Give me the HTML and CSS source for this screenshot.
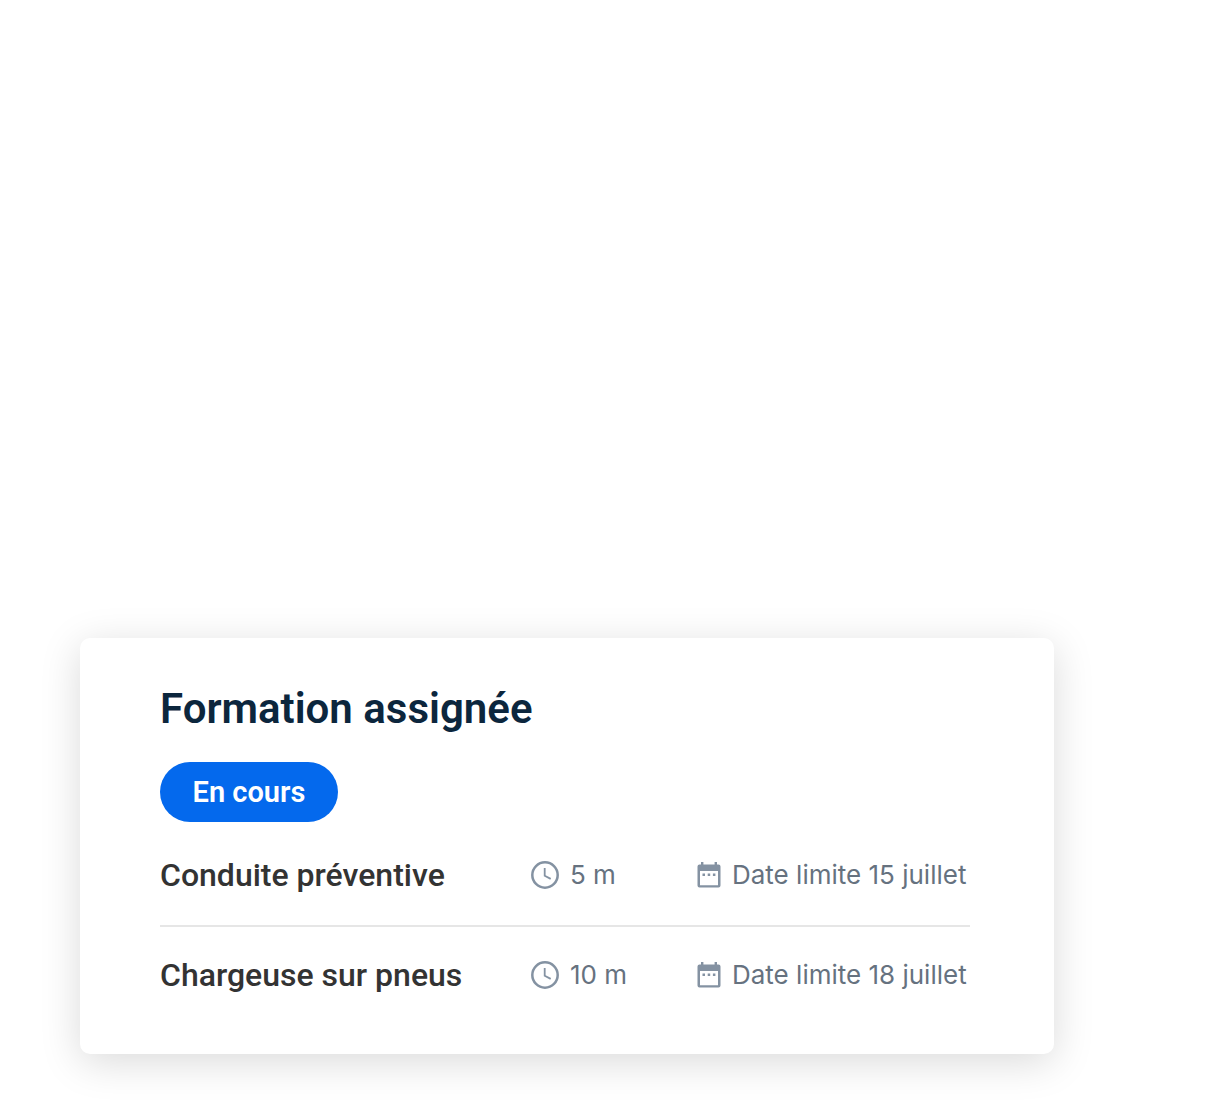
FILE: index.html
```html
<!DOCTYPE html>
<html lang="fr">
<head>
  <meta charset="UTF-8" />
  <meta name="viewport" content="width=device-width, initial-scale=1.0"/>
  <title>Formation assignée</title>
  <link rel="stylesheet" href="styles.css">
</head>
<body>
  <svg class="sprite" aria-hidden="true">
    <symbol id="horloge" viewBox="0 0 28 28">
      <circle cx="14" cy="14" r="12.7" fill="none" stroke="currentColor" stroke-width="2.5"/>
      <path d="M13.7 7v7.7l6 3.2" fill="none" stroke="currentColor" stroke-width="1.8"/>
    </symbol>
    <symbol id="calendrier" viewBox="0 0 24 26">
      <path fill="currentColor" fill-rule="evenodd" d="M4 0h2.4v2.5h11.2V0H20v2.5h1.5a2 2 0 0 1 2 2v19a2 2 0 0 1-2 2h-19a2 2 0 0 1-2-2v-19a2 2 0 0 1 2-2H4zM3 9v14.200h18V9z"/>
      <path fill="currentColor" d="M5.500 11.500H8V14H5.500zM10.700 11.500h2.500V14h-2.500zM15.900 11.500h2.500V14h-2.500z"/>
    </symbol>
  </svg>

  <main class="card">
    <h1>Formation assignée</h1>
    <button type="button" class="statut">En cours</button>

    <table class="formations">
      <tr>
        <th scope="row">Conduite préventive</th>
        <td class="duree"><span class="info"><svg class="icone-horloge" aria-hidden="true"><use href="#horloge"/></svg>5 m</span></td>
        <td class="limite"><span class="info"><svg class="icone-calendrier" aria-hidden="true"><use href="#calendrier"/></svg>Date limite 15 juillet</span></td>
      </tr>
      <tr>
        <th scope="row">Chargeuse sur pneus</th>
        <td class="duree"><span class="info"><svg class="icone-horloge" aria-hidden="true"><use href="#horloge"/></svg>10 m</span></td>
        <td class="limite"><span class="info"><svg class="icone-calendrier" aria-hidden="true"><use href="#calendrier"/></svg>Date limite 18 juillet</span></td>
      </tr>
    </table>
  </main>
</body>
</html>
```

FILE: styles.css
```css
* {
  box-sizing: border-box;
}
body {
  display: flex;
  flex-direction: column;
  justify-content: flex-end;
  min-height: 100vh;
  margin: 0;
  padding: 64px 166px 64px 80px;
  background: #fff;
  font-family: Roboto, Arial, sans-serif;
}
.sprite {
  display: none;
}
.card {
  padding: 47px 84px 29px 80px;
  background: #fff;
  border-radius: 10px;
  box-shadow: 0 8px 40px rgba(0,0,0,0.15);
}
h1 {
  margin: 0 0 29px;
  font-size: 42px;
  line-height: 48px;
  font-weight: 600;
  color: #0c263d;
}
.statut {
  display: block;
  min-width: 178px;
  height: 60px;
  padding: 0 30px;
  border: none;
  border-radius: 30px;
  background: #0469ed;
  color: #fff;
  font-family: inherit;
  font-size: 29px;
  font-weight: 600;
  cursor: pointer;
}
.formations {
  width: 100%;
  margin-top: 5px;
  border-collapse: collapse;
}
.formations tr {
  height: 99px;
}
.formations tr + tr {
  border-top: 2px solid #e6e6e6;
}
.formations th,
.formations td {
  padding: 0 0 3px;
}
.formations th {
  text-align: left;
  font-size: 32px;
  font-weight: 500;
  color: #333;
}
.formations td {
  font-family: Inter, Arial, sans-serif;
  font-size: 26px;
  color: #66727f;
  white-space: nowrap;
}
.formations .duree {
  width: 166px;
}
.formations .limite {
  width: 273px;
}
.info {
  display: flex;
  align-items: center;
}
.icone-horloge,
.icone-calendrier {
  flex: none;
  color: #8492a2;
}
.icone-horloge {
  width: 28px;
  height: 28px;
  margin-right: 11px;
}
.icone-calendrier {
  width: 24px;
  height: 26px;
  margin-right: 11px;
}
```
